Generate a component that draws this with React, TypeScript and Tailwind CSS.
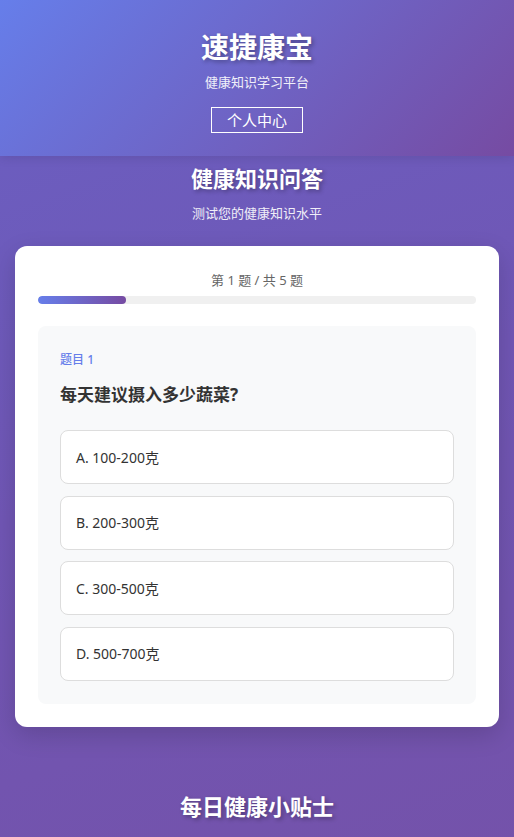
const options = ['A. 100-200克', 'B. 200-300克', 'C. 300-500克', 'D. 500-700克'];

export default function App() {
  const current = 1;
  const total = 5;

  return (
    <div
      className="min-h-screen bg-[linear-gradient(160deg,#6a60c3_0%,#7056b4_50%,#7452aa_100%)] text-white"
      style={{ fontFamily: '"Microsoft YaHei", "Noto Sans", "Noto Sans CJK SC", sans-serif' }}
    >
      <header className="relative z-10 flex flex-col items-center bg-[linear-gradient(135deg,#667eea_0%,#764ba2_100%)] pt-[28px] pb-[23px] shadow-[0_2px_10px_rgba(0,0,0,0.1)]">
        <h1 className="text-[28px] font-bold leading-[38px] [text-shadow:2px_2px_4px_rgba(0,0,0,0.3)]">速捷康宝</h1>
        <p className="mt-[6px] text-[13px] leading-[20px] opacity-90">健康知识学习平台</p>
        <button className="mt-[15px] h-[26px] border border-white px-[15px] text-[15px] leading-[22px] text-white">
          个人中心
        </button>
      </header>

      <section className="px-[15px] pt-[7px]">
        <h2 className="text-center text-[22px] font-bold leading-[30px] [text-shadow:2px_2px_4px_rgba(0,0,0,0.3)]">健康知识问答</h2>
        <p className="mt-[10px] text-center text-[13px] leading-[20px] opacity-90">测试您的健康知识水平</p>

        <div className="mt-[23px] rounded-[12px] bg-white px-[23px] pt-[24px] pb-[23px] shadow-[0_8px_24px_rgba(0,0,0,0.15)]">
          <p className="text-center text-[13px] leading-[20px] text-[#666]">
            第 {current} 题 / 共 {total} 题
          </p>
          <div className="mt-[6px] h-[8px] overflow-hidden rounded-full bg-[#f0f0f0]">
            <div
              className="h-full rounded-full bg-[linear-gradient(90deg,#667eea,#764ba2)]"
              style={{ width: `${(current / total) * 100}%` }}
            />
          </div>

          <div className="mt-[22px] rounded-[8px] bg-[#f8f9fa] px-[22px] pt-[25px] pb-[23px]">
            <p className="text-[12px] font-medium leading-[18px] text-[#667eea]">题目 {current}</p>
            <h3 className="mt-[13px] text-[17px] font-bold leading-[26px] text-[#333]">每天建议摄入多少蔬菜?</h3>
            <div className="mt-[22px] flex flex-col gap-[11.5px]">
              {options.map((opt) => (
                <div
                  key={opt}
                  className="flex h-[54px] items-center rounded-[8px] border border-[#ddd] bg-white px-[15px] text-[14px] text-[#333]"
                >
                  {opt}
                </div>
              ))}
            </div>
          </div>
        </div>
      </section>

      <section className="px-[15px] pt-[64px] pb-[40px]">
        <h2 className="text-center text-[22px] font-bold leading-[30px] [text-shadow:2px_2px_4px_rgba(0,0,0,0.3)]">每日健康小贴士</h2>
      </section>
    </div>
  );
}
